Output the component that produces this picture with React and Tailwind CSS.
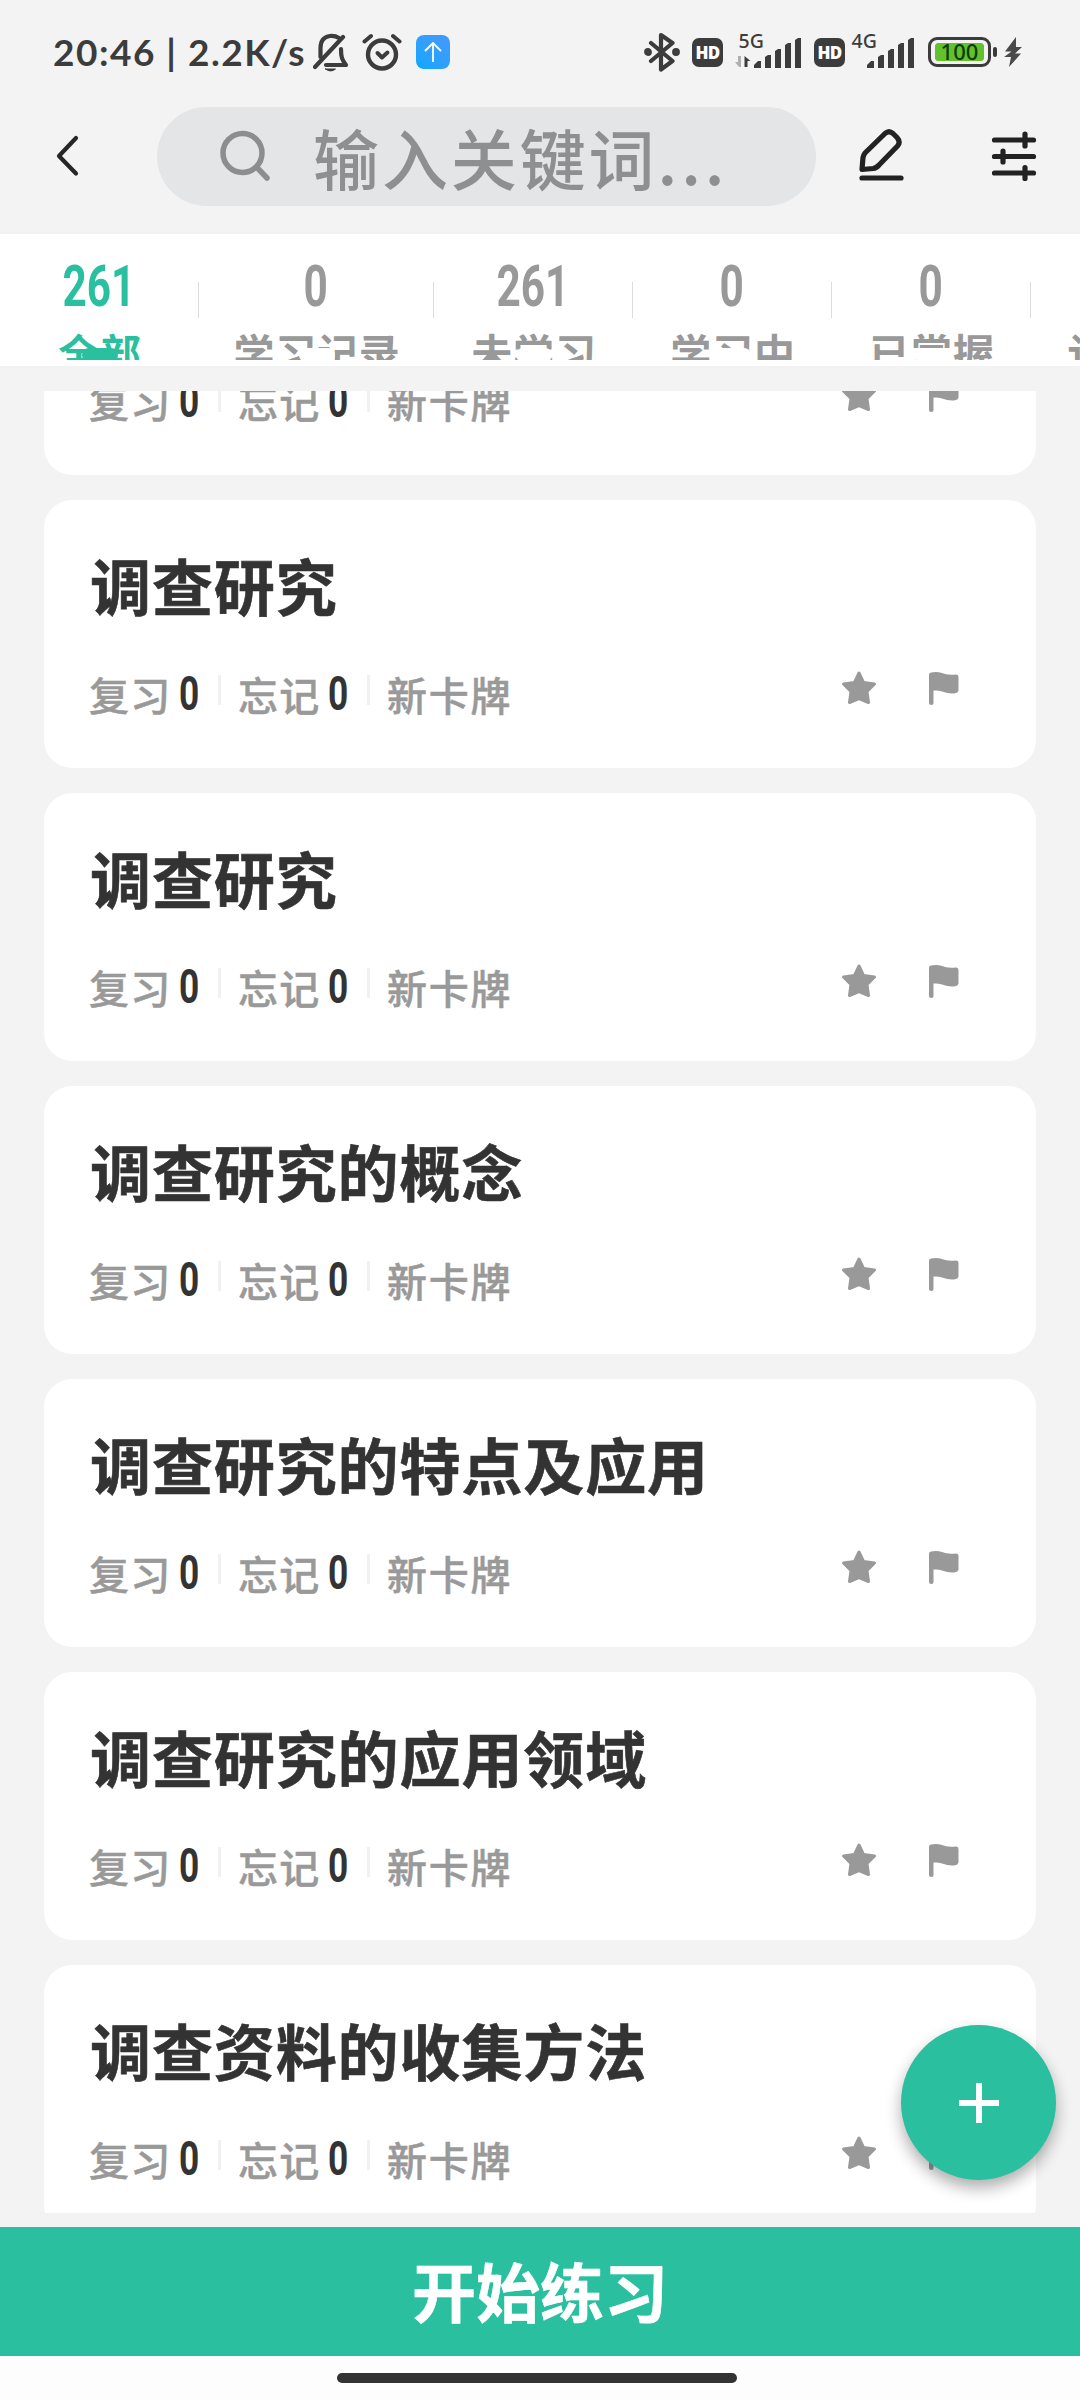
import React from 'react';

const tabs = [
    { count: 261, label: '全部', width: 'w-[199px]', active: true },
    { count: 0, label: '学习记录', width: 'w-[235px]' },
    { count: 261, label: '未学习', width: 'w-[199px]' },
    { count: 0, label: '学习中', width: 'w-[199px]' },
    { count: 0, label: '已掌握', width: 'w-[199px]' },
    { count: '', label: '认识', width: 'w-[155px]' },
];

const cards = [
    '调查研究',
    '调查研究',
    '调查研究',
    '调查研究的概念',
    '调查研究的特点及应用',
    '调查研究的应用领域',
    '调查资料的收集方法',
];

const HdBadge = () => (
    <div className="w-[31px] h-[29px] rounded-[7px] bg-[#3c3c3c] text-white text-[17px] leading-[29px] text-center font-extrabold font-['Open_Sans',sans-serif] tracking-[-0.8px]">
        HD
    </div>
);

const SignalBars = () => (
    <g fill="#3c3c3c">
        <path d="M0 31v-3l4-4h3v7z" />
        <path d="M11 31V20l3-2h3v13z" />
        <path d="M21 31V14l3-2h3v19z" />
        <path d="M31 31V8l3-2h3v25z" />
        <path d="M41 31V3l3-2h3v30z" />
    </g>
);

const StatusBar = () => (
    <div className="h-[107px] shrink-0 flex items-start pt-[32px] pl-[53px] pr-[58px]">
        <div className="w-[260px] h-[40px] leading-[40px] text-[37px] font-bold text-[#3c3c3c] whitespace-nowrap font-['Lato','Noto_Sans_CJK_SC',sans-serif] tracking-[1.5px]">
            20:46 | 2.2K/s
        </div>
        <svg className="w-[36px] h-[40px]" viewBox="0 0 36 40" fill="none" stroke="#3c3c3c" strokeWidth="4.200" strokeLinecap="round" strokeLinejoin="round">
            <path d="M2 35 30 5" />
            <path d="M26 6Q22 3.500 17 4C9 5 7.500 11 7.500 16v9" />
            <path d="M28 17c0 8 1 11 5 16H13" />
            <path d="M12.500 37h10q-5 4-10 0z" fill="#3c3c3c" strokeWidth="1" />
        </svg>
        <svg className="w-[40px] h-[40px] ml-[13px]" viewBox="0 0 40 40" fill="none" stroke="#3c3c3c" strokeLinecap="round" strokeLinejoin="round">
            <circle cx="20" cy="22.500" r="14" strokeWidth="4.400" />
            <path d="M15.500 21l4.500 4.500 5.500-5" strokeWidth="4" />
            <path d="M2.500 9.500 9 4M37.500 9.500 31 4" strokeWidth="4" />
        </svg>
        <div className="w-[34px] h-[34px] mt-[3px] ml-[14px] rounded-[8px] bg-gradient-to-tr from-[#00a8ff] to-[#4398fb] flex items-center justify-center">
            <svg className="w-[18px] h-[20px]" viewBox="0 0 18 20" fill="none" stroke="white" strokeWidth="1.800">
                <path d="M9 20V1.500M1 9l8-8 8 8" />
            </svg>
        </div>

        <div className="ml-auto flex items-start">
            <svg className="w-[36px] h-[40px]" viewBox="0 0 36 40" fill="none" stroke="#3c3c3c" strokeWidth="4.200" strokeLinejoin="round" strokeLinecap="round">
                <path d="M7 11 28.500 29 17 37.500V3L28.500 11 7 29" />
                <circle cx="4" cy="20" r="1.800" />
                <circle cx="32" cy="20" r="1.800" />
            </svg>
            <div className="mt-[6px] ml-[12px]"><HdBadge /></div>
            <svg className="w-[68px] h-[40px] ml-[12px]" viewBox="0 0 68 40">
                <text x="3.500" y="16" fontSize="19.500" fontWeight="500" fill="#3c3c3c" fontFamily="Noto Sans, sans-serif">5G</text>
                <path d="M6 24v11H4l-4-5h3v-6z" fill="#b0b0b0" />
                <path d="M9.500 35V24l6 5h-3v6z" fill="#3c3c3c" />
                <g transform="translate(19 5)"><SignalBars /></g>
            </svg>
            <div className="mt-[6px] ml-[11px]"><HdBadge /></div>
            <svg className="w-[64px] h-[40px] ml-[6px]" viewBox="0 0 64 40">
                <text x="0.500" y="16" fontSize="19.500" fontWeight="500" fill="#3c3c3c" fontFamily="Noto Sans, sans-serif">4G</text>
                <g transform="translate(16 5)"><SignalBars /></g>
            </svg>
            <svg className="w-[70px] h-[40px] ml-[13px]" viewBox="0 0 70 40">
                <rect x="1.500" y="6.500" width="60" height="27" rx="7.500" fill="none" stroke="#3c3c3c" strokeWidth="3" />
                <rect x="7" y="11" width="49" height="18" rx="3.500" fill="#62c12d" />
                <rect x="65" y="15" width="4" height="10" rx="2" fill="#3c3c3c" />
                <text x="31.500" y="28" textAnchor="middle" fontSize="22" fontWeight="500" fill="#0d3d05" fontFamily="Noto Sans, sans-serif">100</text>
            </svg>
            <svg className="w-[18px] h-[40px] ml-[6px]" viewBox="0 0 18 40">
                <path d="M12 5 1 19.500h6.500L0 25h7L5 35 17 21.500h-6L18 15h-6z" fill="#4a4a4a" />
            </svg>
        </div>
    </div>
);

const SearchHeader = () => (
    <div className="h-[127px] shrink-0 flex items-start pl-[56px]">
        <svg className="w-[24px] h-[42px] mt-[28px]" viewBox="0 0 24 42" fill="none" stroke="#262626" strokeWidth="4.200" strokeLinecap="round" strokeLinejoin="round">
            <path d="M20 3 3 21l17 17.500" />
        </svg>
        <div className="w-[659px] h-[99px] ml-[77px] rounded-full bg-[#e4e5e7] flex items-center">
            <svg className="w-[52px] h-[52px] ml-[62px] mt-[-1px]" viewBox="0 0 52 52" fill="none" stroke="#8c8d8f" strokeWidth="5.500" strokeLinecap="round">
                <circle cx="23.500" cy="23" r="19.500" />
                <path d="M38 37.500 48 48" />
            </svg>
            <div className="ml-[42px] mt-[-1px] text-[66px] leading-[99px] font-medium text-[#8e8f91] tracking-[2.9px] whitespace-nowrap">
                输入关键词<span className="tracking-[4px]">...</span>
            </div>
        </div>
        <svg className="w-[46px] h-[56px] mt-[21px] ml-[42px]" viewBox="0 0 46 56" fill="none" stroke="#222" strokeWidth="5.200" strokeLinecap="round" strokeLinejoin="round">
            <path d="M4 41.500 5 29.500Q5.500 27 7 25L27 5.500Q31 2 35 5.500L39 9.500Q43 14 39.500 18L21 37Q18.500 40 15 40.500z" />
            <path d="M4 50h39" />
        </svg>
        <svg className="w-[46px] h-[54px] mt-[23px] ml-[87px]" viewBox="0 0 46 54" fill="none" stroke="#222" strokeWidth="5.200" strokeLinecap="round">
            <path d="M3.500 10h39M3.500 26.500h39M3.500 43h39" />
            <path d="M34 4v12M12 21v11M34 37.500v11" />
        </svg>
    </div>
);

const Tab = ({ tab }) => (
    <div className={`${tab.width} shrink-0 h-full relative flex flex-col items-center ${tab.active ? 'text-[#2abf9f]' : 'text-[#999]'}`}>
        <span className="shrink-0 h-[58px] leading-[58px] mt-[23px] -ml-[2px] text-[58px] font-bold font-['Roboto',sans-serif] scale-x-[0.73]">
            {tab.count}
        </span>
        <span className="shrink-0 mt-[12px] ml-px h-[48px] leading-[48px] text-[41px] font-bold tracking-[0.8px] whitespace-nowrap">
            {tab.label}
        </span>
        <span className={`absolute left-1/2 -translate-x-1/2 top-[114px] w-[36px] h-[14px] rounded-[7px] ${tab.active ? 'bg-[#2abf9f]' : 'bg-white'}`} />
        <span className="absolute right-0 top-[48px] w-px h-[36px] bg-[#ddd]" />
    </div>
);

const Stat = ({ label, value }) => (
    <div className="flex items-center w-[149px]">
        <span className="text-[40px] leading-[48px] font-medium text-[#999] tracking-[1.3px] [-webkit-text-stroke:0.5px]">{label}</span>
        <span className="ml-[3px] text-[49px] leading-[48px] font-bold text-[#333] font-['Roboto',sans-serif] scale-x-[0.72]">{value}</span>
        <span className="ml-auto mr-[17px] mt-[-8px] w-[3px] h-[30px] bg-[#f1f1f1]" />
    </div>
);

const Card = ({ title }) => (
    <div className="h-[268px] shrink-0 rounded-[28px] bg-white pl-[46px] pr-[75px]">
        <div className="pt-[49px] h-[121px] text-[61px] leading-[72px] font-bold text-[#333] tracking-[0.9px] whitespace-nowrap [-webkit-text-stroke:0.6px]">{title}</div>
        <div className="mt-[49px] -ml-px flex items-center h-[48px]">
            <Stat label="复习" value={0} />
            <Stat label="忘记" value={0} />
            <span className="text-[40px] leading-[48px] font-medium text-[#999] tracking-[1.7px] [-webkit-text-stroke:0.5px]">新卡牌</span>
            <svg className="w-[36px] h-[36px] ml-auto mt-[-12px]" viewBox="0 0 36 36" fill="#999" stroke="#999" strokeWidth="3" strokeLinejoin="round">
                <path d="M18 3 22.500 12.500 33.500 14 26 21.500 27.500 32.500 18 28.500 8.500 32.500 10 21.500 2.500 14 13.500 12.500z" />
            </svg>
            <svg className="w-[32px] h-[36px] ml-[51px] mt-[-10px] mr-px" viewBox="0 0 32 36" fill="#999">
                <path d="M1 3.500Q1 2 3 1.500 9 .3 14 2 19 4.500 28 3.500 30.500 3.300 30.500 6V19.500Q30 22 27 22.200 21 23 14 20.500 10 19 5.500 19.500V32.500Q5 34 3.200 34 1 34 1 32z" />
            </svg>
        </div>
    </div>
);

const App = () => {
    return (
        <div className="relative w-[1080px] h-[2400px] overflow-hidden bg-[#f3f3f3] flex flex-col font-['Noto_Sans_CJK_SC',sans-serif]">
            <StatusBar />
            <SearchHeader />

            <div className="h-[132px] shrink-0 bg-white">
                <div className="h-[126px] flex overflow-hidden">
                    {tabs.map((tab, i) => <Tab key={i} tab={tab} />)}
                </div>
            </div>

            {/* scrolled so that only the foot of the first card shows */}
            <div className="mt-[25px] h-[1822px] shrink-0 overflow-hidden px-[44px] flex flex-col justify-start">
                <div className="-mt-[184px] flex flex-col gap-[25px]">
                    {cards.map((title, i) => <Card key={i} title={title} />)}
                </div>
            </div>

            <div className="mt-[14px] h-[129px] shrink-0 bg-[#2abf9f] text-white text-[64px] leading-[125px] text-center font-bold [-webkit-text-stroke:0.6px]">
                开始练习
            </div>
            <div className="flex-1 bg-[#fdfdfd] flex justify-center pt-[17px]">
                <div className="w-[400px] h-[10px] mr-[6px] rounded-full bg-[#333]" />
            </div>

            <button className="absolute left-[901px] top-[2025px] w-[155px] h-[155px] rounded-full bg-[#2abf9f] shadow-[0_8px_16px_rgba(0,0,0,0.32)] flex items-center justify-center">
                <svg className="w-[40px] h-[40px]" viewBox="0 0 40 40" stroke="white" strokeWidth="6">
                    <path d="M20 0v40M0 20h40" />
                </svg>
            </button>
        </div>
    );
};

export default App;
